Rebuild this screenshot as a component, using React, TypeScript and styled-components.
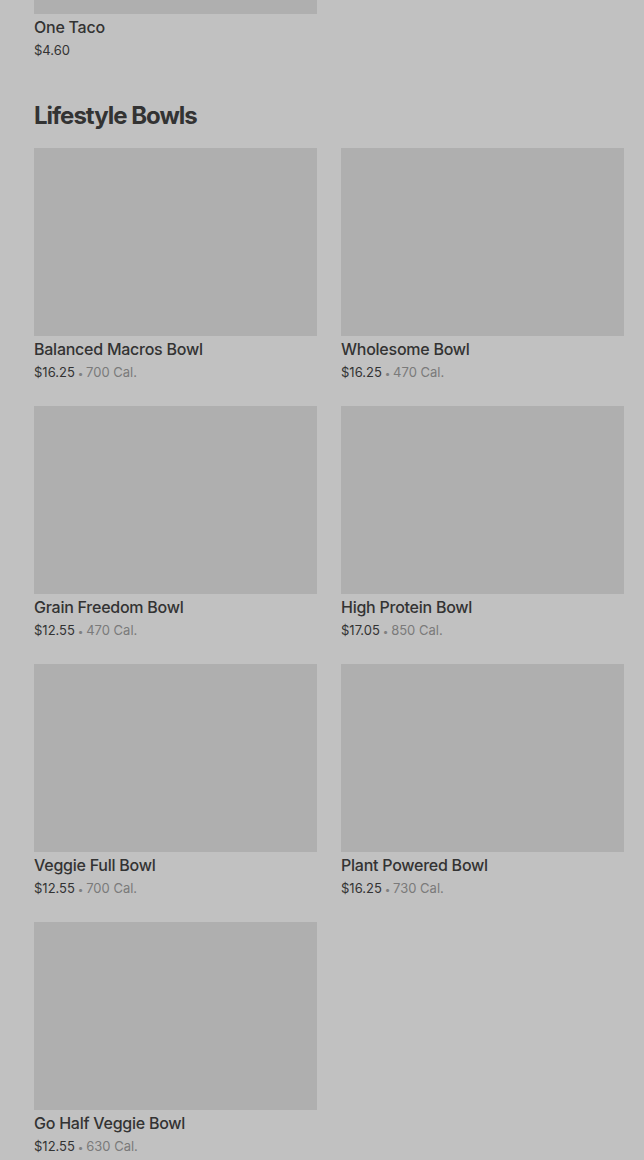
import styled, { createGlobalStyle } from 'styled-components';

const GlobalStyle = createGlobalStyle`
  html, body {
    margin: 0;
    padding: 0;
    background: #c1c1c1;
    overflow: hidden;
  }
  body {
    font-family: Inter, "Liberation Sans", sans-serif;
    color: #333333;
  }
`;

type Item = { name: string; price: string; cal?: string };

const bowls: Item[] = [
  { name: 'Balanced Macros Bowl', price: '$16.25', cal: '700 Cal.' },
  { name: 'Wholesome Bowl', price: '$16.25', cal: '470 Cal.' },
  { name: 'Grain Freedom Bowl', price: '$12.55', cal: '470 Cal.' },
  { name: 'High Protein Bowl', price: '$17.05', cal: '850 Cal.' },
  { name: 'Veggie Full Bowl', price: '$12.55', cal: '700 Cal.' },
  { name: 'Plant Powered Bowl', price: '$16.25', cal: '730 Cal.' },
  { name: 'Go Half Veggie Bowl', price: '$12.55', cal: '630 Cal.' },
];

const ItemCard = ({ item }: { item: Item }) => (
  <Card>
    <Photo />
    <Name>{item.name}</Name>
    <Price>
      {item.price}
      {item.cal && (
        <>
          <Dot> • </Dot>
          <Cal>{item.cal}</Cal>
        </>
      )}
    </Price>
  </Card>
);

const App = () => {
  return (
    <>
      <GlobalStyle />
      <Page>
        <Section $first>
          <Grid>
            <ItemCard item={{ name: 'One Taco', price: '$4.60' }} />
          </Grid>
        </Section>
        <Section>
          <Heading>Lifestyle Bowls</Heading>
          <Grid>
            {bowls.map((b) => (
              <ItemCard key={b.name} item={b} />
            ))}
          </Grid>
        </Section>
      </Page>
    </>
  );
};

export default App;

const Page = styled.div`
  padding: 0 20px 0 34px;
  display: flex;
  flex-direction: column;
  gap: 40px;
`;

const Section = styled.section<{ $first?: boolean }>`
  margin-top: ${(p) => (p.$first ? '-174px' : '0')};
`;

const Heading = styled.h2`
  margin: 0 0 16px;
  font-size: 24px;
  line-height: 32px;
  font-weight: 700;
  color: #333333;
  letter-spacing: -1px;
`;

const Grid = styled.div`
  display: grid;
  grid-template-columns: 283px 283px;
  column-gap: 24px;
  row-gap: 24px;
`;

const Card = styled.div`
  display: flex;
  flex-direction: column;
`;

const Photo = styled.div`
  height: 188px;
  background: #afafaf;
`;

const Name = styled.div`
  height: 24px;
  padding-top: 1px;
  box-sizing: border-box;
  font-size: 16px;
  line-height: 24px;
  font-weight: 500;
  color: #333333;
  letter-spacing: -0.25px;
`;

const Price = styled.div`
  height: 22px;
  padding-top: 1px;
  box-sizing: border-box;
  font-size: 13px;
  line-height: 22px;
  color: #333333;
`;

const Dot = styled.span`
  color: #808080;
  font-size: 10px;
`;

const Cal = styled.span`
  color: #7a7a7a;
`;
